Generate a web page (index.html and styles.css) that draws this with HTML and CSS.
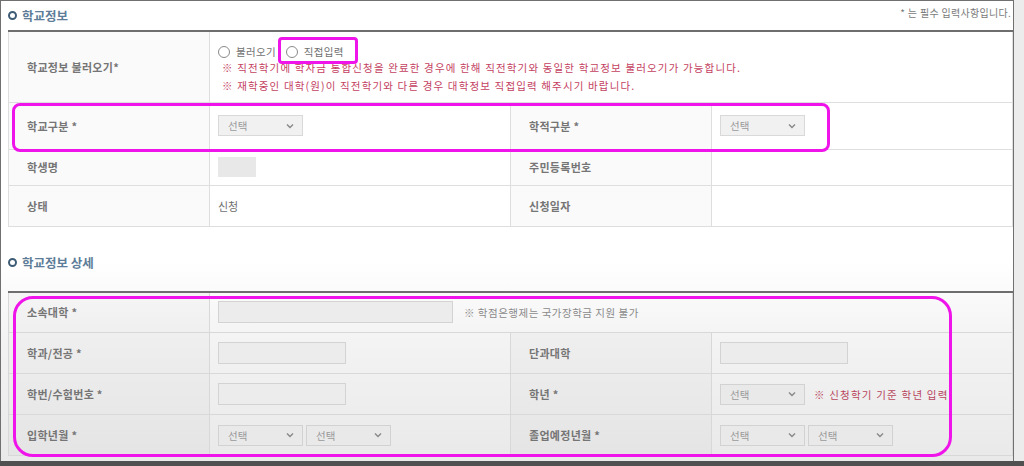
FILE: index.html
```html
<!DOCTYPE html>
<html>
<head>
    <title>학교정보</title>
    <link rel="stylesheet" href="styles.css">
</head>
<body>
    <div class="frame">
        <div class="section-head">
            <h2 class="section-title"><span class="ring"></span>학교정보</h2>
            <span class="required-note">* 는 필수 입력사항입니다.</span>
        </div>

        <table class="info-table first">
            <colgroup>
                <col class="col-label"><col class="col-value"><col class="col-label"><col class="col-value">
            </colgroup>
            <tr class="row-load">
                <th>학교정보 불러오기*</th>
                <td colspan="3">
                    <div class="radio-line">
                        <label class="radio-item"><span class="radio"></span>불러오기</label>
                        <label class="radio-item"><span class="radio"></span>직접입력</label>
                    </div>
                    <p class="warn">※ 직전학기에 학자금 통합신청을 완료한 경우에 한해 직전학기와 동일한 학교정보 불러오기가 가능합니다.</p>
                    <p class="warn">※ 재학중인 대학(원)이 직전학기와 다른 경우 대학정보 직접입력 해주시기 바랍니다.</p>
                </td>
            </tr>
            <tr class="row-type">
                <th>학교구분 *</th>
                <td><div class="select"><span>선택</span><svg width="8" height="6" viewBox="0 0 8 6"><path d="M1 1.5 L4 4.5 L7 1.5" fill="none" stroke="#888" stroke-width="1.4"/></svg></div></td>
                <th>학적구분 *</th>
                <td><div class="select"><span>선택</span><svg width="8" height="6" viewBox="0 0 8 6"><path d="M1 1.5 L4 4.5 L7 1.5" fill="none" stroke="#888" stroke-width="1.4"/></svg></div></td>
            </tr>
            <tr class="row-name">
                <th>학생명</th>
                <td><div class="name-box"></div></td>
                <th>주민등록번호</th>
                <td></td>
            </tr>
            <tr class="row-state">
                <th>상태</th>
                <td>신청</td>
                <th>신청일자</th>
                <td></td>
            </tr>
        </table>

        <div class="section-head second">
            <h2 class="section-title"><span class="ring"></span>학교정보 상세</h2>
        </div>

        <table class="info-table detail">
            <colgroup>
                <col class="col-label"><col class="col-value"><col class="col-label"><col class="col-value">
            </colgroup>
            <tr>
                <th>소속대학 *</th>
                <td colspan="3">
                    <div class="field-line">
                        <div class="text-input wide"></div>
                        <span class="gray-note">※ 학점은행제는 국가장학금 지원 불가</span>
                    </div>
                </td>
            </tr>
            <tr>
                <th>학과/전공 *</th>
                <td><div class="text-input"></div></td>
                <th>단과대학</th>
                <td><div class="text-input"></div></td>
            </tr>
            <tr>
                <th>학번/수험번호 *</th>
                <td><div class="text-input"></div></td>
                <th>학년 *</th>
                <td>
                    <div class="field-line">
                        <div class="select"><span>선택</span><svg width="8" height="6" viewBox="0 0 8 6"><path d="M1 1.5 L4 4.5 L7 1.5" fill="none" stroke="#888" stroke-width="1.4"/></svg></div>
                        <span class="red-note">※ 신청학기 기준 학년 입력</span>
                    </div>
                </td>
            </tr>
            <tr>
                <th>입학년월 *</th>
                <td>
                    <div class="field-line tight">
                        <div class="select"><span>선택</span><svg width="8" height="6" viewBox="0 0 8 6"><path d="M1 1.5 L4 4.5 L7 1.5" fill="none" stroke="#888" stroke-width="1.4"/></svg></div>
                        <div class="select"><span>선택</span><svg width="8" height="6" viewBox="0 0 8 6"><path d="M1 1.5 L4 4.5 L7 1.5" fill="none" stroke="#888" stroke-width="1.4"/></svg></div>
                    </div>
                </td>
                <th>졸업예정년월 *</th>
                <td>
                    <div class="field-line tight">
                        <div class="select"><span>선택</span><svg width="8" height="6" viewBox="0 0 8 6"><path d="M1 1.5 L4 4.5 L7 1.5" fill="none" stroke="#888" stroke-width="1.4"/></svg></div>
                        <div class="select"><span>선택</span><svg width="8" height="6" viewBox="0 0 8 6"><path d="M1 1.5 L4 4.5 L7 1.5" fill="none" stroke="#888" stroke-width="1.4"/></svg></div>
                    </div>
                </td>
            </tr>
        </table>

        <div class="mark mark-radio"></div>
        <div class="mark mark-row"></div>
        <div class="mark mark-detail"></div>
    </div>
    <div class="bottom-strip"></div>
</body>
</html>
```

FILE: styles.css
```css
* {
    margin: 0;
    padding: 0;
    box-sizing: border-box;
    font-family: "Noto Sans CJK KR", "Noto Sans", sans-serif;
}

body {
    background-color: #ececec;
    width: 1024px;
    height: 466px;
    overflow: hidden;
}

.frame {
    position: relative;
    width: 1014px;
    height: 461px;
    border: 1px solid #707070;
    border-bottom: none;
    padding: 0 2px 0 7px;
    background: linear-gradient(to bottom, #ffffff 0, #ffffff 260px, #f3f3f3 340px, #e9e9e9 461px);
}

.bottom-strip {
    height: 5px;
    background-color: #505050;
}

.section-head {
    display: flex;
    justify-content: space-between;
    align-items: center;
    height: 29px;
}

.section-head.second {
    height: 64px;
    padding-top: 8px;
}

.section-title {
    display: flex;
    align-items: center;
    gap: 5px;
    font-size: 12.5px;
    font-weight: bold;
    color: #5d7d98;
}

.ring {
    width: 9px;
    height: 9px;
    border: 2px solid #3e5c76;
    border-radius: 50%;
}

.required-note {
    font-size: 10px;
    color: #7a7a7a;
    padding-bottom: 6px;
    letter-spacing: 0.3px;
}

.info-table {
    width: 1004px;
    border-collapse: collapse;
    table-layout: fixed;
    border-top: 2px solid #6e6e6e;
}

.col-label {
    width: 201px;
}

.col-value {
    width: 301px;
}

th, td {
    border: 1px solid #dedede;
    text-align: left;
    font-size: 11px;
    color: #707070;
    vertical-align: middle;
}

th {
    padding-left: 18px;
    font-weight: bold;
    color: #757575;
    letter-spacing: 0.3px;
    background-color: rgba(0, 0, 0, 0.02);
}

td {
    padding-left: 8px;
}

.row-load {
    height: 71px;
}

.row-type {
    height: 47px;
}

.row-name {
    height: 36px;
}

.row-state {
    height: 41px;
}

.detail tr {
    height: 41px;
}

.detail th, .detail td {
    border-color: #d8d8d8;
}

.radio-line {
    display: flex;
    gap: 10px;
    padding-top: 6px;
}

.radio-item {
    display: flex;
    align-items: center;
    gap: 6px;
    font-size: 10.5px;
    color: #707070;
    letter-spacing: 0.3px;
}

.radio {
    width: 12px;
    height: 12px;
    border: 1px solid #8a8a8a;
    border-radius: 50%;
    background-color: #fff;
}

.warn {
    font-size: 10.5px;
    color: #c4415f;
    padding-left: 4px;
    line-height: 18px;
    letter-spacing: 1.15px;
}

.select {
    display: flex;
    justify-content: space-between;
    align-items: center;
    width: 85px;
    height: 21px;
    padding: 0 8px 0 9px;
    background-color: #f1f1f1;
    border: 1px solid #d9d9d9;
    font-size: 10.5px;
    color: #9a9a9a;
}

.detail .select {
    background-color: #e9e9e9;
    border-color: #d2d2d2;
}

.name-box {
    width: 38px;
    height: 20px;
    background-color: #e8e8e8;
}

.text-input {
    width: 128px;
    height: 22px;
    background-color: #ececec;
    border: 1px solid #d3d3d3;
}

.text-input.wide {
    width: 235px;
}

.field-line {
    display: flex;
    align-items: center;
    gap: 11px;
}

.field-line.tight {
    gap: 3px;
}

.gray-note {
    font-size: 10.5px;
    color: #8a8a8a;
    letter-spacing: 0.5px;
}

.red-note {
    font-size: 10.5px;
    color: #b8455d;
    margin-left: -2px;
    letter-spacing: 1.2px;
}

.mark {
    position: absolute;
    border: 3px solid #ef14e9;
}

.mark-radio {
    left: 277px;
    top: 36px;
    width: 80px;
    height: 27px;
    border-radius: 4px;
}

.mark-row {
    left: 11px;
    top: 102px;
    width: 818px;
    height: 49px;
    border-radius: 8px;
}

.mark-detail {
    left: 12px;
    top: 295px;
    width: 939px;
    height: 161px;
    border-radius: 20px;
}
```
